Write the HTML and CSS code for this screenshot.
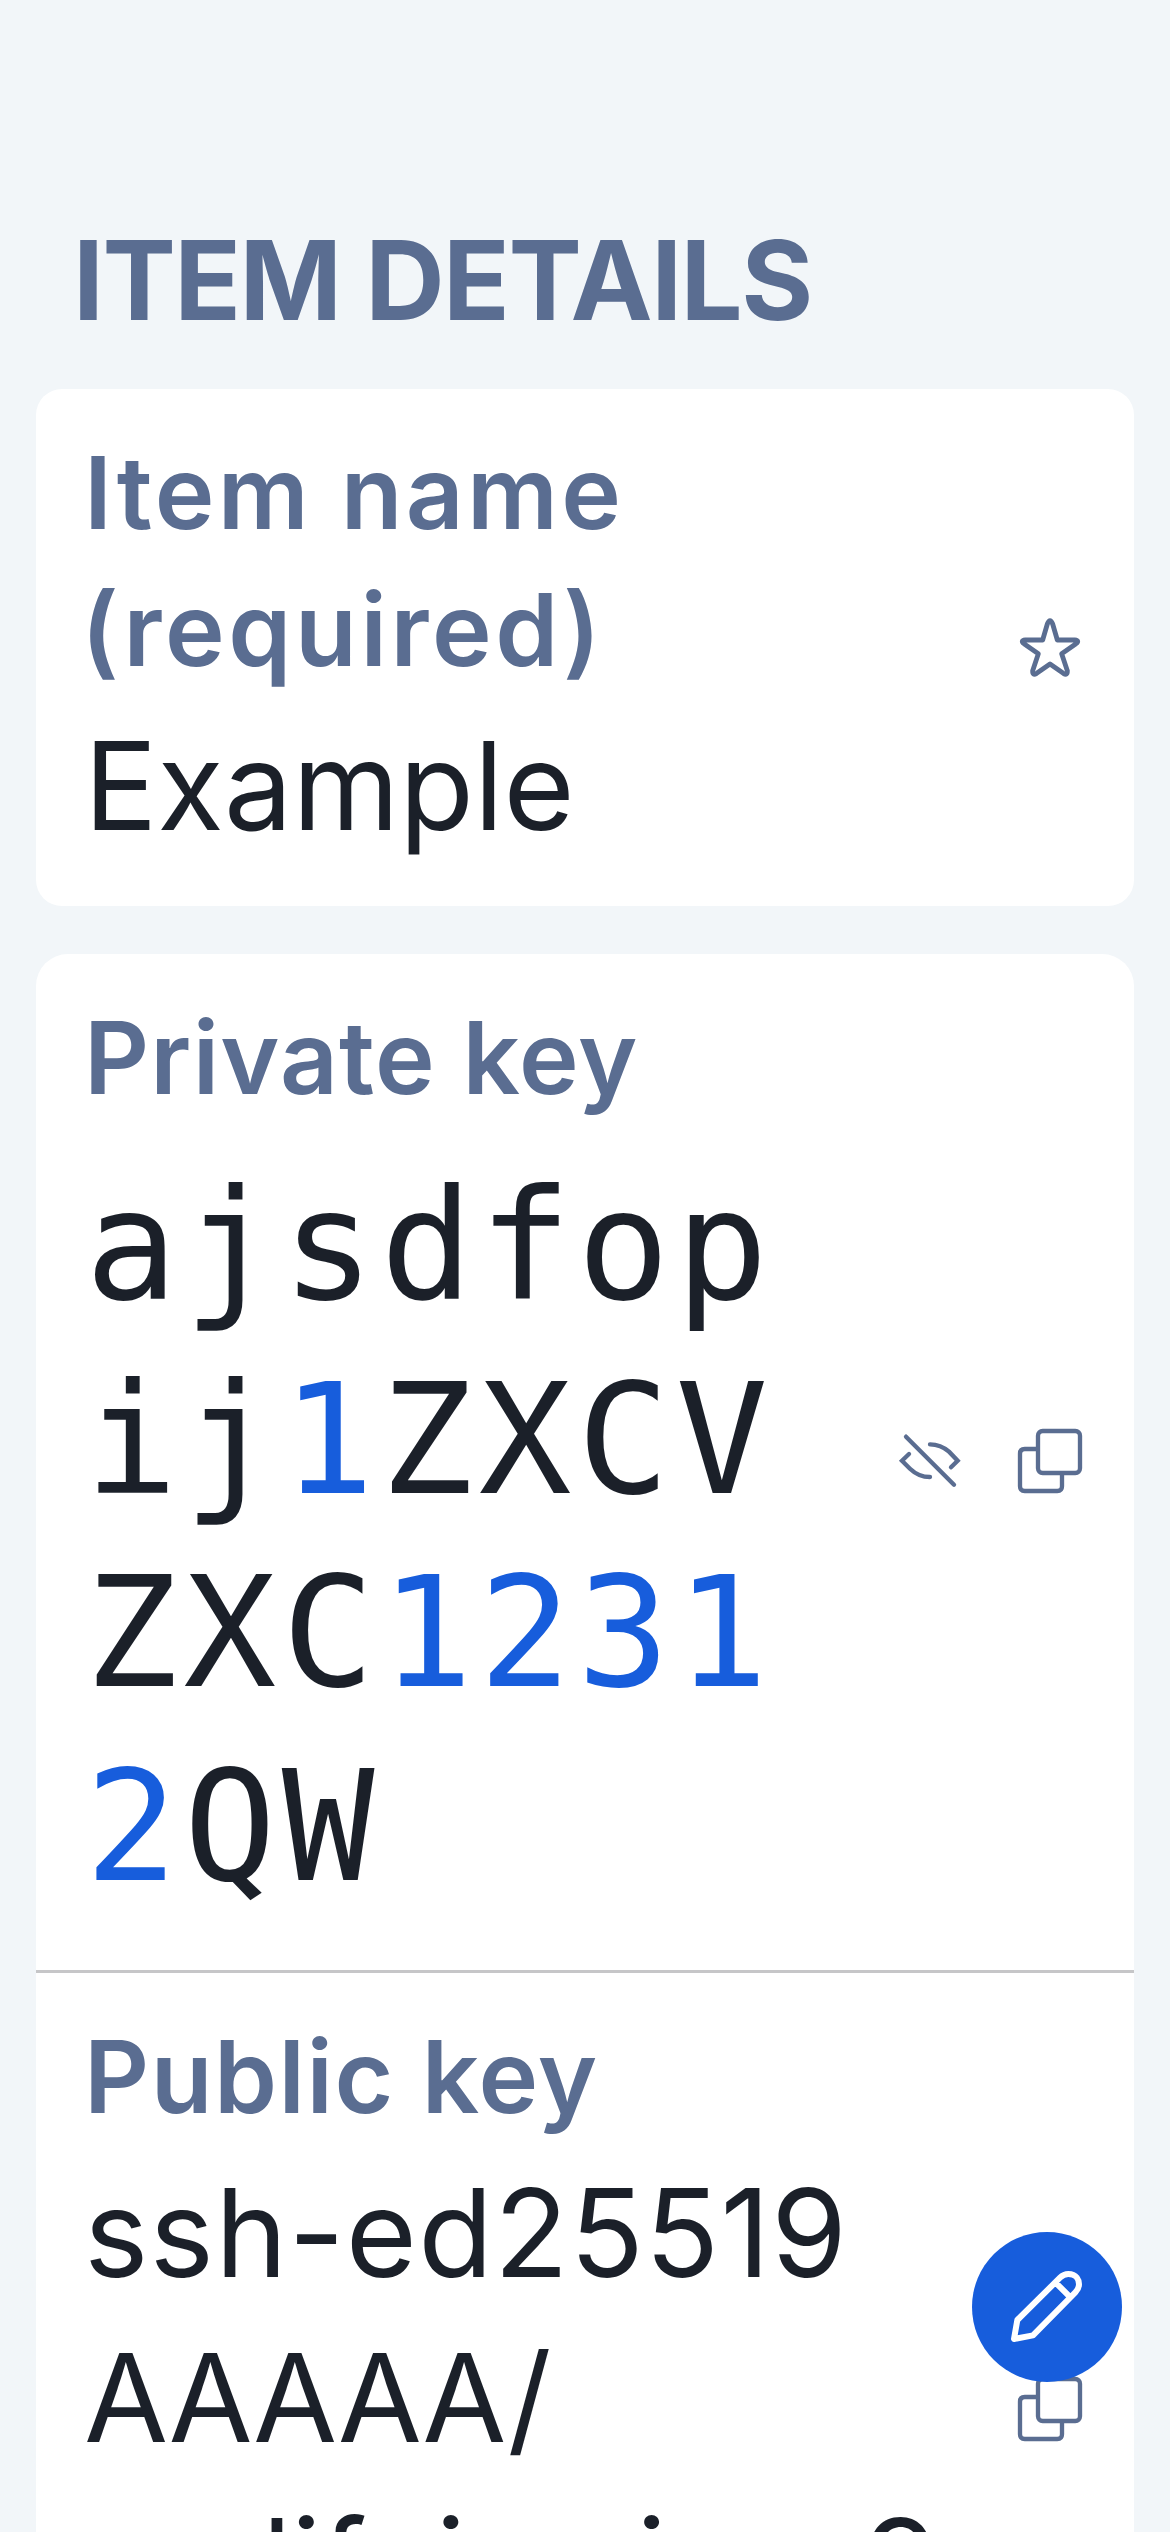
FILE: index.html
```html
<!DOCTYPE html>
<html lang="en">
<head>
<meta charset="utf-8">
<title>Item details</title>
<link rel="stylesheet" href="styles.css">
</head>
<body>
<main class="screen">
  <h1 class="section-title">ITEM DETAILS</h1>

  <section class="card card-name">
    <div class="field">
      <div class="content">
        <div class="label"><span class="t-item">Item name</span><br><span class="t-req">(required)</span></div>
        <div class="value">Example</div>
      </div>
      <div class="actions">
        <svg class="icon" viewBox="0 0 216 216" fill="none" stroke="currentColor" stroke-width="14.500" stroke-linejoin="round"><path d="M100 30 Q108 10 116 30 L130 78 H182 Q198 80 186 89 L143 119 L160 170 Q161 186 148 178 L108 150 L68 178 Q55 186 56 170 L73 119 L30 89 Q18 80 34 78 H86 Z"/></svg>
      </div>
    </div>
  </section>

  <section class="card card-keys">
    <div class="field">
      <div class="content">
        <div class="label"><span class="t-private">Private key</span></div>
        <div class="secret">ajsdfop<br>ij<b>1</b>ZXCV<br>ZXC<b>1231</b><br><b>2</b>QW</div>
      </div>
      <div class="actions actions-secret">
        <svg class="icon" viewBox="0 0 216 216" fill="none" stroke="currentColor" stroke-width="13" stroke-linecap="round"><path d="M36 35 L180 179 M45 87 L24 107 L48 131 Q74 156 108 156 M108 58 Q140 58 165 80 L191 107 L171 127"/></svg>
        <svg class="icon" viewBox="0 0 216 216" fill="none" stroke="currentColor" stroke-width="13"><rect x="72" y="18" width="126" height="126" rx="14"/><path d="M72 72 H32 Q18 72 18 86 V184 Q18 198 32 198 H130 Q144 198 144 184 V144"/></svg>
      </div>
    </div>
    <div class="field field-public">
      <div class="content">
        <div class="label"><span class="t-public">Public key</span></div>
        <div class="value"><span class="t-ssh">ssh-ed25519</span><br><span class="t-aaa">AAAAA/</span><br><span class="t-cut">asdifoimsisas9</span></div>
      </div>
      <div class="actions actions-public">
        <svg class="icon" viewBox="0 0 216 216" fill="none" stroke="currentColor" stroke-width="13"><rect x="72" y="18" width="126" height="126" rx="14"/><path d="M72 72 H32 Q18 72 18 86 V184 Q18 198 32 198 H130 Q144 198 144 184 V144"/></svg>
      </div>
    </div>
  </section>

  <button class="fab" aria-label="Edit">
    <svg viewBox="66 66 450 450" fill="none" stroke="currentColor" stroke-width="18" stroke-linejoin="round"><path d="M202 330 L330 203 Q341 192 355 192 C380 192 387 211 387 223 Q387 236 376 247 L249 376 L192 387 Z M316 217 L362 263"/></svg>
  </button>
</main>
</body>
</html>
```
FILE: styles.css
```css
* { box-sizing: border-box; }
body { margin: 0; background: #f2f6f9; color: #1b2029; font-family: Inter, "Liberation Sans", sans-serif; }
.screen { position: relative; height: 2532px; overflow: hidden; padding: 207px 36px 0; }
.section-title { margin: 0 0 36px; padding-left: 37px; height: 146px; line-height: 146px; font-size: 110px; font-weight: 700; letter-spacing: -1.500px; color: #5a6d91; white-space: nowrap; }
.card { background: #fff; }
.card-name { height: 517px; padding: 35px 48px 0; border-radius: 26px; margin-bottom: 48px; }
.card-keys { height: 1700px; border-radius: 32px; }
.card-keys .field { height: 1016px; padding: 35px 48px 0; }
.card-keys .field-public { height: 684px; border-top: 3px solid #c6c6c8; }
.field { display: flex; justify-content: space-between; }
.content { white-space: nowrap; }
.label { font-size: 101px; font-weight: 600; line-height: 137px; color: #5a6d91; }
.t-item { letter-spacing: 3.300px; }
.t-req { letter-spacing: 3.600px; margin-left: -3px; }
.t-private { letter-spacing: 1.200px; }
.t-public { letter-spacing: 1.500px; }
.value { margin-top: 5px; font-size: 122px; line-height: 165px; }
.t-ssh { letter-spacing: 1.200px; }
.t-aaa { letter-spacing: -1.400px; }
.secret { margin: 23px 0 0 1px; font-family: "DejaVu Sans Mono", monospace; font-size: 154px; line-height: 193.500px; letter-spacing: 5.700px; }
.secret b { font-weight: 400; color: #175ddc; }
.actions { display: flex; gap: 48px; color: #5a6d91; padding-top: 190px; }
.actions-secret { padding-top: 436px; }
.actions-public { padding-top: 365px; }
.icon { width: 72px; height: 72px; }
.fab { position: absolute; left: 972px; top: 2232px; width: 150px; height: 150px; padding: 0; border: 0; border-radius: 50%; background: #175ddc; color: #fff; }
.fab svg { display: block; width: 150px; height: 150px; }
```
